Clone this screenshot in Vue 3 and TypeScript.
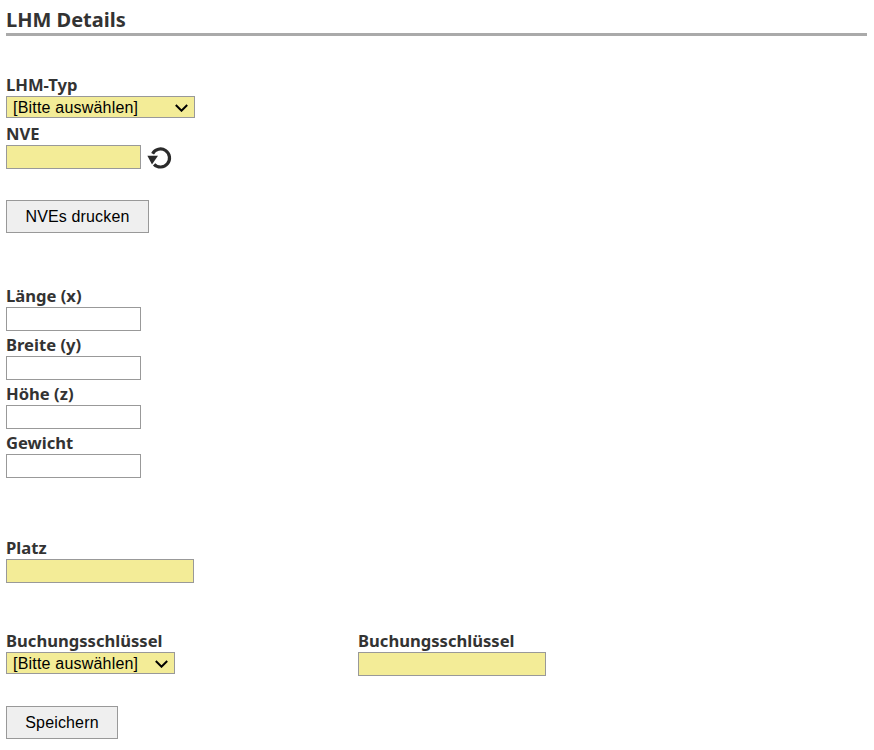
<script setup lang="ts">
const dimensions = ["Länge (x)", "Breite (y)", "Höhe (z)", "Gewicht"];
</script>

<template>
  <div class="page">
    <h1 class="title">LHM Details</h1>

    <section class="group group-lhm">
      <label class="label">LHM-Typ</label>
      <div class="select-wrap wide">
        <select class="select required">
          <option>[Bitte auswählen]</option>
        </select>
        <svg class="chevron" viewBox="0 0 13 8" width="13" height="8" aria-hidden="true">
          <path d="M0.8 1L6.5 6.7L12.2 1" fill="none" stroke="#000" stroke-width="2" />
        </svg>
      </div>
      <label class="label">NVE</label>
      <div class="with-icon">
        <input class="input required" type="text" />
        <svg class="reset" viewBox="0 0 26 26" width="26" height="26" aria-hidden="true">
          <path d="M6.6 9.7A9 9 0 1 1 8.1 20.3" fill="none" stroke="#2b2b2b" stroke-width="3.2" />
          <path d="M1.4 11.8H12L6 20.4Z" fill="#2b2b2b" />
        </svg>
      </div>
    </section>

    <button class="button print" type="button">NVEs drucken</button>

    <section class="group group-dims">
      <template v-for="name in dimensions" :key="name">
        <label class="label">{{ name }}</label>
        <input class="input" type="text" />
      </template>
    </section>

    <section class="group group-place">
      <label class="label">Platz</label>
      <input class="input required long" type="text" />
    </section>

    <section class="booking">
      <div class="booking-col">
        <label class="label">Buchungsschlüssel</label>
        <div class="select-wrap narrow">
          <select class="select required">
            <option>[Bitte auswählen]</option>
          </select>
          <svg class="chevron" viewBox="0 0 13 8" width="13" height="8" aria-hidden="true">
            <path d="M0.8 1L6.5 6.7L12.2 1" fill="none" stroke="#000" stroke-width="2" />
          </svg>
        </div>
      </div>
      <div class="booking-col">
        <label class="label">Buchungsschlüssel</label>
        <input class="input required long" type="text" />
      </div>
    </section>

    <button class="button save" type="button">Speichern</button>
  </div>
</template>

<style>
body {
  background: #fff;
}
</style>

<style scoped>
.page {
  width: 861px;
  height: 750px;
  padding: 0 6px;
  overflow: hidden;
  font-family: "Noto Sans", Lato, "Liberation Sans", sans-serif;
  color: #333;
}

.title {
  margin: 0;
  height: 36px;
  padding-top: 8px;
  box-sizing: border-box;
  font-size: 20px;
  line-height: 24px;
  font-weight: 700;
}

.title::after {
  content: "";
  display: block;
  height: 3px;
  background: #aaa;
  margin-top: 1px;
}

.group {
  display: flex;
  flex-direction: column;
  align-items: flex-start;
}

.group-lhm {
  margin-top: 35px;
}

.group-dims {
  margin-top: 49px;
}

.group-place {
  margin-top: 56px;
}

.label {
  display: block;
  box-sizing: border-box;
  height: 25px;
  padding-top: 3px;
  font-size: 16.6px;
  line-height: 22px;
  font-weight: 700;
}

.input,
.select {
  box-sizing: border-box;
  border: 1px solid #999;
  border-radius: 0;
  margin: 0;
  outline: none;
  font-family: "Liberation Sans", Arial, sans-serif;
  font-size: 16px;
  color: #000;
}

.input {
  display: block;
  width: 135px;
  height: 24px;
  padding: 1px 2px;
  background: #fff;
}

.input.long {
  width: 188px;
}

.select-wrap {
  position: relative;
  height: 22px;
}

.select-wrap.wide {
  width: 189px;
  margin-bottom: 2px;
}

.select-wrap.narrow {
  width: 169px;
}

.select {
  display: block;
  width: 100%;
  height: 22px;
  padding: 0 0 0 6px;
  appearance: none;
  letter-spacing: 0.2px;
}

.chevron {
  position: absolute;
  top: 8px;
  right: 7px;
  pointer-events: none;
}

.input.required,
.select.required {
  background-color: #f3ec97;
}

.with-icon {
  display: flex;
  align-items: center;
  gap: 5px;
  height: 24px;
}

.reset {
  flex: none;
}

.button {
  display: block;
  box-sizing: border-box;
  height: 33px;
  margin: 0;
  padding: 0;
  border: 1px solid #999;
  border-radius: 0;
  background: #efefef;
  font-family: "Liberation Sans", Arial, sans-serif;
  font-size: 16px;
  letter-spacing: 0.15px;
  color: #000;
}

.print {
  width: 143px;
  margin-top: 31px;
}

.save {
  width: 112px;
  margin-top: 30px;
}

.booking {
  display: flex;
  margin-top: 44px;
}

.booking-col {
  width: 352px;
}

.booking-col + .booking-col {
  width: auto;
}
</style>
